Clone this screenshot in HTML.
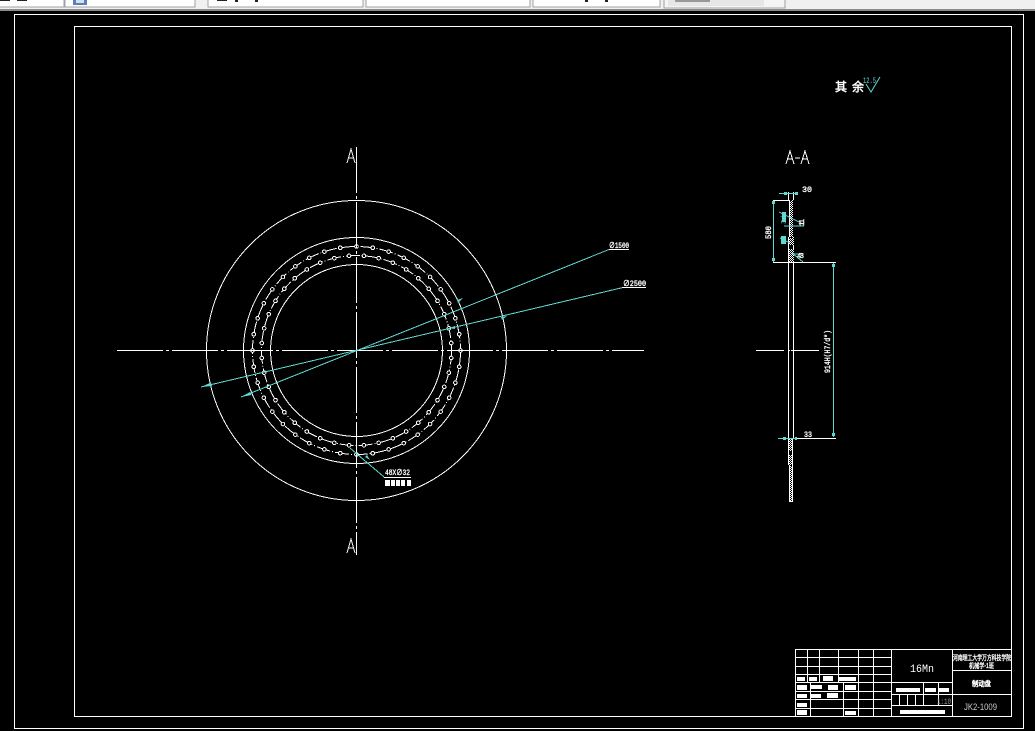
<!DOCTYPE html>
<html><head><meta charset="utf-8"><style>
html,body{margin:0;padding:0;background:#000;width:1035px;height:731px;overflow:hidden}
svg{display:block}
text{font-family:"Liberation Sans","Noto Sans CJK SC",sans-serif;fill:#fff}
.m{font-family:"Liberation Mono","Noto Sans CJK SC",monospace}
.b{stroke:#fff;stroke-width:.35}
.t{stroke:#fff;stroke-width:.5}
</style></head><body>
<svg xmlns="http://www.w3.org/2000/svg" width="1035" height="731" viewBox="0 0 1035 731">
<defs>
<pattern id="chk" width="2" height="2" patternUnits="userSpaceOnUse"><rect width="2" height="2" fill="#000"/><rect width="1" height="1" fill="#fff"/><rect x="1" y="1" width="1" height="1" fill="#fff"/></pattern>
<circle id="h1" cx="356.5" cy="246.5" r="1.8" fill="#000" stroke="#fff"/>
<circle id="h2" cx="356.5" cy="255.5" r="1.8" fill="#000" stroke="#fff"/>
<g id="q1"><use href="#h1"/><use href="#h1" transform="rotate(9 356.5 350.5)"/><use href="#h1" transform="rotate(18 356.5 350.5)"/><use href="#h1" transform="rotate(27 356.5 350.5)"/><use href="#h1" transform="rotate(36 356.5 350.5)"/><use href="#h1" transform="rotate(45 356.5 350.5)"/><use href="#h1" transform="rotate(54 356.5 350.5)"/><use href="#h1" transform="rotate(63 356.5 350.5)"/><use href="#h1" transform="rotate(72 356.5 350.5)"/><use href="#h1" transform="rotate(81 356.5 350.5)"/></g>
<g id="q2"><use href="#h2" transform="rotate(4.5 356.5 350.5)"/><use href="#h2" transform="rotate(13.5 356.5 350.5)"/><use href="#h2" transform="rotate(22.5 356.5 350.5)"/><use href="#h2" transform="rotate(31.5 356.5 350.5)"/><use href="#h2" transform="rotate(40.5 356.5 350.5)"/><use href="#h2" transform="rotate(49.5 356.5 350.5)"/><use href="#h2" transform="rotate(58.5 356.5 350.5)"/><use href="#h2" transform="rotate(67.5 356.5 350.5)"/><use href="#h2" transform="rotate(76.5 356.5 350.5)"/><use href="#h2" transform="rotate(85.5 356.5 350.5)"/></g>
</defs>
<rect width="1035" height="731" fill="#000"/>
<!-- toolbar -->
<rect width="1035" height="9" fill="#f0f0f0"/>
<rect y="9" width="1035" height="2" fill="#8a8a8a"/>
<g fill="#fff" stroke="#a0a0a0"><rect x="-2" y="-3" width="66" height="10"/><rect x="65" y="-3" width="130" height="10"/><rect x="208" y="-3" width="155" height="10"/><rect x="366" y="-3" width="164" height="10"/><rect x="533" y="-3" width="127" height="10"/></g>
<rect x="664" y="-3" width="121" height="11" fill="#f4f4f4" stroke="#a0a0a0"/>
<rect x="668" y="0" width="96" height="6" fill="#e6e6e6"/>
<rect x="73" y="0" width="14" height="5" fill="#5b7fb8"/><rect x="76" y="0" width="8" height="3" fill="#cfe0f4"/>
<rect x="0" y="0" width="10" height="1" fill="#222"/><rect x="17" y="0" width="10" height="1" fill="#222"/>
<rect x="217" y="0" width="10" height="1" fill="#222"/><rect x="235" y="0" width="3" height="2" fill="#222"/><rect x="255" y="0" width="3" height="2" fill="#222"/>
<rect x="585" y="0" width="3" height="2" fill="#222"/><rect x="605" y="0" width="3" height="2" fill="#222"/>
<rect x="675" y="0" width="35" height="2" fill="#999"/>

<g shape-rendering="crispEdges" fill="none" stroke="#fff" stroke-width="1">
<!-- frames -->
<rect x="14.5" y="14.5" width="1009" height="714"/>
<rect x="74.5" y="26.5" width="937" height="690"/>
<!-- circles -->
<circle cx="356.5" cy="350.5" r="150"/>
<circle cx="356.5" cy="350.500" r="113"/>
<circle cx="356.5" cy="350.5" r="104" stroke-dasharray="14 2 1 2"/>
<circle cx="356.5" cy="350.5" r="95" stroke-dasharray="14 2 1 2"/>
<circle cx="356.5" cy="350.5" r="86"/>
<use href="#q1"/><use href="#q1" transform="rotate(90 356.5 350.5)"/><use href="#q1" transform="rotate(180 356.5 350.5)"/><use href="#q1" transform="rotate(270 356.5 350.5)"/>
<use href="#q2"/><use href="#q2" transform="rotate(90 356.5 350.5)"/><use href="#q2" transform="rotate(180 356.5 350.5)"/><use href="#q2" transform="rotate(270 356.5 350.5)"/>
<!-- center lines -->
<path d="M117 350.5H644" stroke-dasharray="46 3 3 3"/>
<path d="M356.5 147V555" stroke-dasharray="46 3 3 3"/>
<path d="M756 350.5H784M788 350.5H790M791 350.5H819"/>
<!-- section -->
<path d="M788.5 192V200M793.5 192V200M789.5 200V237M792.5 200V237M788.5 237V262M793.5 237V262M788.5 262V438M793.5 262V438M788.5 438V465M792.5 438V465M789.5 465V502M792.5 465V502M789.5 501.5H792.5"/>
<path d="M773 200.5H790M773 262.5H836M781 438.5H836" />
</g>
<rect x="790" y="201" width="3" height="36" fill="url(#chk)"/>
<rect x="789" y="238" width="5" height="7" fill="url(#chk)"/>
<rect x="789" y="249" width="5" height="13" fill="url(#chk)"/>
<rect x="789" y="439" width="3" height="12" fill="url(#chk)"/>
<rect x="789" y="455" width="3" height="10" fill="url(#chk)"/>
<rect x="790" y="466" width="2" height="35" fill="url(#chk)"/>

<!-- cyan -->
<g shape-rendering="crispEdges" fill="none" stroke="#5fd8d2" stroke-width="1">
<path d="M609 249.5L241 397"/>
<path d="M623 287.5L201 387"/>
<path d="M350 448L384 477"/>
<path d="M779 193.5H796"/>
<path d="M773.5 201V262"/>
<path d="M833.5 263V437"/>
<path d="M778 438.500H797"/>
<path d="M779 212L803 224M780 238L790 243M792 253L803 262M784 226H804M793 254H802"/>
</g>
<g fill="#5fd8d2"><rect x="784" y="192" width="3" height="3"/><rect x="795" y="192" width="3" height="3"/>
<rect x="772" y="201" width="3" height="3"/><rect x="772" y="258" width="3" height="3"/>
<rect x="832" y="264" width="3" height="3"/><rect x="832" y="433" width="3" height="3"/>
<rect x="783" y="437" width="3" height="3"/><rect x="795" y="437" width="2" height="3"/>
<path d="M201 387l10-4.500 1 3.500z"/>
<path d="M241 397l9-5 1.500 3z"/>
<path d="M449 328l6-2v3zM463 298l-6 2 1 3zM507 316l-6 1 1 3zM365 457l5 3-3-5z"/>
<rect x="781" y="236" width="5" height="8"/><rect x="782" y="212" width="4" height="10"/></g>
<g shape-rendering="crispEdges" stroke="#fff" fill="none">
<path d="M609 249.5H629M622 287.5H646M384 477.5H411"/>
</g>

<!-- labels -->
<g shape-rendering="crispEdges" fill="none" stroke="#fff"><path d="M347 163L351 149L355 163M348.5 158H353.5"/><path d="M347 553L351 539L355 553M348.5 548H353.5"/><path d="M786 164L790 151L794 164M787.500 159H792.500"/><path d="M801 164L805 151L809 164M802.500 159H807.500"/><path d="M795 158H800"/></g>
<text x="609" y="248" class="m b" font-size="8" textLength="20" lengthAdjust="spacingAndGlyphs">∅1500</text>
<text x="623" y="286" class="m b" font-size="8" textLength="23" lengthAdjust="spacingAndGlyphs">∅2500</text>
<text x="385" y="475" class="m b" font-size="8" textLength="25" lengthAdjust="spacingAndGlyphs">48X∅32</text>
<g fill="#fff"><rect x="385" y="480" width="5" height="6"/><rect x="391" y="480" width="4" height="6"/><rect x="396" y="480" width="4" height="6"/><rect x="401" y="480" width="4" height="6"/><rect x="407" y="480" width="4" height="6"/></g>
<text x="802" y="192" class="m b" font-size="8" textLength="10" lengthAdjust="spacingAndGlyphs">30</text>
<text x="804" y="437" class="m b" font-size="8" textLength="8" lengthAdjust="spacingAndGlyphs">33</text>
<text class="m b" font-size="8" transform="translate(771 239) rotate(-90)" textLength="13" lengthAdjust="spacingAndGlyphs">580</text>
<text class="m b" font-size="8" transform="translate(830 373) rotate(-90)" textLength="43" lengthAdjust="spacingAndGlyphs">914H(H7/d*)</text>
<text class="m b" font-size="7" transform="translate(804 226) rotate(-90)" textLength="7">11</text>
<text class="m b" font-size="7" x="797" y="258" textLength="7">43</text>
<text class="m" font-size="7" style="fill:#5fd8d2" transform="translate(786 224) rotate(-90)">3/</text>

<!-- surface finish -->
<text x="835" y="91" font-size="12" class="t">其</text>
<text x="852" y="91" font-size="12" class="t">余</text>
<path d="M866 84L871 92L880 77" fill="none" stroke="#5fd8d2"/>
<text x="863" y="83" class="m" font-size="8" style="fill:#5fd8d2" textLength="13" lengthAdjust="spacingAndGlyphs">12.5</text>

<!-- title block -->
<g shape-rendering="crispEdges" fill="none" stroke="#fff">
<rect x="795.500" y="649.500" width="216" height="67"/>
<path d="M795 657.500H891M795 666.500H891M795 674.500H891M795 682.500H952M795 691.500H891M795 699.500H891M795 708.500H891"/>
<path d="M807.500 649V682M819.500 649V682M838.500 649V682M858.500 649V717M873.500 649V717M891.500 649V717M952.500 649V717"/>
<path d="M810.500 682V717M843.500 682V717"/>
<path d="M952 670.500H1012M952 694.500H1012M891 694.500H952M891 705.500H952"/>
<path d="M923.500 682V705M938.500 682V705M899.500 694V705M907.500 694V705M915.500 694V705"/>
</g>
<g fill="#fff">
<rect x="797" y="677" width="8" height="4"/><rect x="809" y="677" width="8" height="4"/><rect x="823" y="676" width="10" height="5"/><rect x="839" y="677" width="17" height="4"/>
<rect x="797" y="685" width="10" height="5"/><rect x="811" y="685" width="11" height="4"/><rect x="828" y="685" width="10" height="5"/><rect x="845" y="685" width="11" height="5"/>
<rect x="797" y="694" width="10" height="4"/><rect x="811" y="694" width="10" height="4"/><rect x="827" y="693" width="11" height="5"/>
<rect x="797" y="703" width="10" height="4"/>
<rect x="797" y="710" width="10" height="5"/><rect x="845" y="711" width="11" height="4"/>
<rect x="896" y="688" width="24" height="4"/><rect x="925" y="688" width="11" height="4"/><rect x="939" y="688" width="10" height="4"/>
<rect x="900" y="710" width="45" height="4"/>
</g>
<text x="910" y="672" class="m" font-size="11" textLength="24" lengthAdjust="spacingAndGlyphs">16Mn</text>
<text x="937" y="704" class="m" font-size="8" style="fill:#999" textLength="14" lengthAdjust="spacingAndGlyphs">1:10</text>
<text x="964" y="710" font-size="9" style="fill:#ccc" textLength="33" lengthAdjust="spacingAndGlyphs">JK2-1009</text>
<text x="953" y="660" font-size="7" class="b" textLength="58" lengthAdjust="spacingAndGlyphs">河南理工大学万方科技学院</text>
<text x="969" y="668" font-size="7" class="b" textLength="25" lengthAdjust="spacingAndGlyphs">机械学-1班</text>
<text x="972" y="686" font-size="7" class="t" textLength="19" lengthAdjust="spacingAndGlyphs">制动盘</text>
</svg>
</body></html>
